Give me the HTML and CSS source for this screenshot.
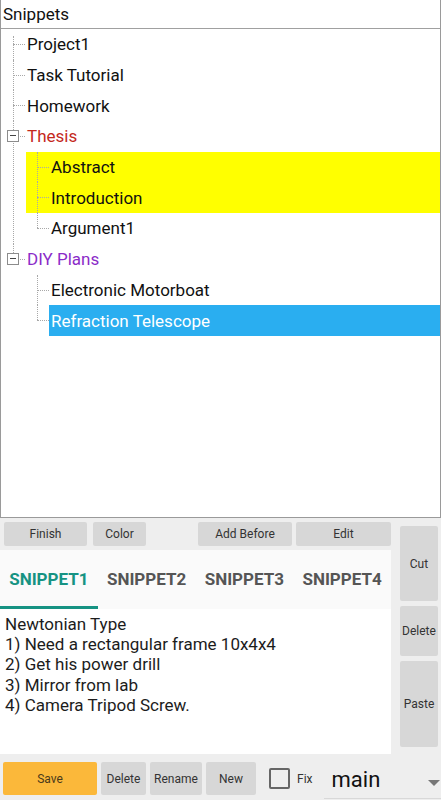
FILE: index.html
```html
<!DOCTYPE html>
<html>
<head>
<meta charset="utf-8">
<link rel="stylesheet" href="styles.css">
</head>
<body>
<div class="panel">
  <div class="panel-head">Snippets</div>
  <ul class="tree">
    <li><div class="row">Project1</div></li>
    <li><div class="row">Task Tutorial</div></li>
    <li><div class="row">Homework</div></li>
    <li>
      <span class="toggle"></span>
      <div class="row red">Thesis</div>
      <ul class="sub">
        <li><div class="row hl">Abstract</div></li>
        <li><div class="row hl">Introduction</div></li>
        <li class="last"><div class="row">Argument1</div></li>
      </ul>
    </li>
    <li class="last">
      <span class="toggle"></span>
      <div class="row purple">DIY Plans</div>
      <ul class="sub">
        <li><div class="row">Electronic Motorboat</div></li>
        <li class="last"><div class="row sel">Refraction Telescope</div></li>
      </ul>
    </li>
  </ul>
</div>

<div class="lower">
  <div class="main-col">
    <div class="btnbar">
      <button class="btn w-finish">Finish</button>
      <button class="btn w-color">Color</button>
      <button class="btn w-add push">Add Before</button>
      <button class="btn w-edit">Edit</button>
    </div>
    <div class="tabs">
      <div class="tab active">SNIPPET1</div>
      <div class="tab">SNIPPET2</div>
      <div class="tab">SNIPPET3</div>
      <div class="tab">SNIPPET4</div>
    </div>
    <div class="note">Newtonian Type<br>1) Need a rectangular frame 10x4x4<br>2) Get his power drill<br>3) Mirror from lab<br>4) Camera Tripod Screw.</div>
  </div>
  <div class="side-col">
    <button class="btn side cut">Cut</button>
    <button class="btn side del">Delete</button>
    <button class="btn side paste">Paste</button>
  </div>
</div>

<div class="bottom">
  <button class="btn save">Save</button>
  <button class="btn b-del">Delete</button>
  <button class="btn b-ren">Rename</button>
  <button class="btn b-new">New</button>
  <span class="check"></span>
  <span class="fix">Fix</span>
  <div class="spinner">
    <span class="spin-text">main</span>
    <span class="arrow"></span>
  </div>
</div>
</body>
</html>
```
FILE: styles.css
```css
* { box-sizing: border-box; }
html, body {
  margin: 0;
  padding: 0;
  width: 441px;
  height: 800px;
  overflow: hidden;
  background: #eeeeee;
  font-family: Roboto, "Liberation Sans", sans-serif;
  color: #111;
}
button {
  font-family: Roboto, "Liberation Sans", sans-serif;
  border: none;
  padding: 0;
  margin: 0;
}

.panel {
  height: 518px;
  background: #fff;
  border: 1px solid #9a9a9a;
  border-top: none;
}
.panel-head {
  height: 29px;
  line-height: 28px;
  padding-left: 2px;
  font-size: 17px;
  border-bottom: 1px solid #a0a0a0;
}

.tree, .tree ul {
  list-style: none;
  margin: 0;
  padding: 0;
}
.tree { padding-left: 12px; }
.tree li { position: relative; }
.tree li::before {
  content: "";
  position: absolute;
  left: 0;
  top: 0;
  bottom: 0;
  border-left: 1px dotted #a8a8a8;
}
.tree > li:first-child::before { top: 7px; }
.tree li.last::before { bottom: auto; height: 15px; }
.tree li::after {
  content: "";
  position: absolute;
  left: 0;
  top: 15px;
  width: 12px;
  border-top: 1px dotted #a8a8a8;
}
.tree .sub { padding-left: 24px; }

.row {
  height: 30.7px;
  display: flex;
  align-items: center;
  padding-left: 14px;
  font-size: 17px;
  white-space: nowrap;
}
.row.red { color: #c4281c; }
.row.purple { color: #8b2bc8; }
.row.hl {
  background: #ffff00;
  margin-left: -11px;
  padding-left: 25px;
}
.row.sel {
  background: #2aaef0;
  color: #fff;
  margin-left: 12px;
  padding-left: 2px;
}

.toggle {
  position: absolute;
  left: -6px;
  top: 9px;
  width: 12px;
  height: 12px;
  border: 1px solid #8c8c8c;
  background: #fff;
  z-index: 2;
}
.toggle::after {
  content: "";
  position: absolute;
  left: 2px;
  top: 4px;
  width: 6px;
  border-top: 1px solid #444;
}

.lower {
  display: flex;
  height: 236px;
}
.main-col {
  width: 391px;
  padding-top: 4px;
  display: flex;
  flex-direction: column;
}
.btnbar {
  display: flex;
  height: 24px;
  padding-left: 4px;
  gap: 6px;
  margin-bottom: 4px;
}
.btn {
  background: #d7d7d7;
  border-radius: 2px;
  font-size: 12px;
  color: #333;
  display: flex;
  align-items: center;
  justify-content: center;
}
.w-finish { width: 83px; }
.w-color { width: 53px; }
.w-add { width: 94px; }
.w-edit { width: 95px; margin-left: -2px; }
.push { margin-left: auto; }

.tabs {
  display: flex;
  height: 59px;
  background: #fafafa;
}
.tab {
  flex: 1;
  display: flex;
  align-items: center;
  justify-content: center;
  font-size: 17px;
  font-weight: bold;
  color: #555;
  border-bottom: 3px solid transparent;
  padding-top: 2px;
}
.tab.active {
  color: #169383;
  border-bottom-color: #169383;
}

.note {
  height: 145px;
  background: #fff;
  padding: 5px 0 0 5px;
  font-size: 17px;
  line-height: 20.2px;
  color: #1c1c1c;
}

.side-col {
  flex: 1;
  padding: 8px 3px 0 9px;
  display: flex;
  flex-direction: column;
  gap: 5px;
}
.side { width: 38px; }
.cut { height: 75px; }
.del { height: 50px; }
.paste { height: 86px; }

.bottom {
  display: flex;
  align-items: center;
  height: 42px;
  padding: 8px 0 1px 3px;
}
.bottom .btn { height: 33px; margin-right: 4px; }
.save { width: 94px; background: #fbb83a; color: #4a3a1a; }
.b-del { width: 45px; }
.b-ren { width: 52px; }
.b-new { width: 50px; }
.check {
  width: 21px;
  height: 21px;
  border: 2px solid #666;
  border-radius: 2px;
  margin-left: 9px;
  background: transparent;
}
.fix {
  font-size: 12px;
  color: #333;
  margin-left: 7px;
}
.spinner {
  flex: 1;
  margin-left: 11px;
  display: flex;
  align-items: center;
  justify-content: space-between;
  border-bottom: 1px solid #d8d8d8;
  align-self: flex-end;
  margin-bottom: -4px;
  height: 38px;
}
.spin-text {
  font-size: 22px;
  color: #111;
  padding-left: 8px;
}
.arrow {
  width: 0;
  height: 0;
  border-left: 6px solid transparent;
  border-right: 6px solid transparent;
  border-top: 6px solid #777;
  margin-right: 1px;
  margin-top: 6px;
}
```
